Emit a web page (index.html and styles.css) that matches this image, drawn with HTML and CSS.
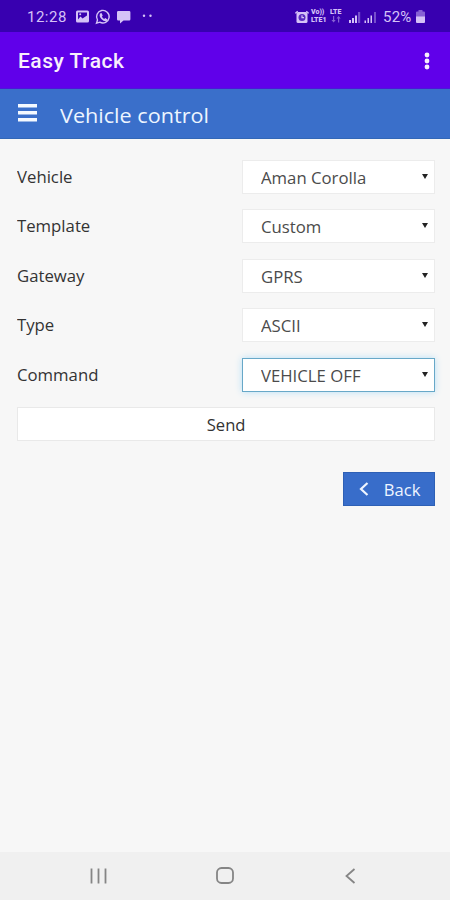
FILE: index.html
```html
<!DOCTYPE html>
<html lang="en">
<head>
<meta charset="utf-8">
<title>Easy Track</title>
<link rel="stylesheet" href="styles.css">
</head>
<body>
<div class="statusbar">
  <span class="clock">12:28</span>
  <svg class="notifications" width="80" height="16" viewBox="0 0 80 16">
    <path fill-rule="evenodd" d="M1.500 1.500h10q1.500 0 1.500 1.500v9q0 1.500-1.500 1.500h-10q-1.500 0-1.500-1.500v-9q0-1.500 1.500-1.500zM2 3.500v7l2.500-3 2 2 4.500-3v-3z"/>
    <circle cx="4.200" cy="5.300" r="1"/>
    <path class="line" d="M20.500 14.200l1-3.200a6.300 6.300 0 1 1 2.300 2.200z"/>
    <path d="M24 4.500l1.500-.5 1.200 2.500-.8 1.200q.8 1.500 2.200 2.200l1.200-.8 2.200 1.300-.8 1.500q-2.500 1-5.300-2t-1.200-5.400z"/>
    <path d="M42.200 2h11q1.200 0 1.200 1.200v7q0 1.200-1.200 1.200h-5.700l-3.500 3v-3h-1.800q-1.200 0-1.200-1.200v-7q0-1.200 1.200-1.200z"/>
    <circle cx="68" cy="6.800" r="1.200"/><circle cx="74.500" cy="6.800" r="1.200"/>
  </svg>
  <svg class="alarm" width="14" height="14" viewBox="0 0 14 14">
    <path d="M3 2h8q1.500 0 1.500 1.500v8q0 1.500-1.500 1.500h-8q-1.500 0-1.500-1.500v-8q0-1.500 1.500-1.500z"/>
    <circle class="face" cx="7" cy="7.500" r="3.500"/>
    <path class="hands" d="M7 5.300v2.400h2"/>
    <path class="line" d="M.3 3.300l2.400-2M13.700 3.300l-2.400-2"/>
  </svg>
  <span class="lte"><b>Vo))</b><b>LTE1</b></span>
  <span class="lte lte-two"><b>LTE</b>
    <svg width="12" height="7" viewBox="0 0 12 7"><path opacity=".5" d="M3 0h1.200v4h1.500L3.600 6.500 1.500 4H3zM8 6.500h1.200v-4h1.500L8.600 0 6.500 2.500H8z"/></svg>
  </span>
  <svg class="signal" width="28" height="12" viewBox="0 0 28 12">
    <path d="M0 9h2v3H0zM3 7h2v5H3zM6 4.500h2V12H6z"/><path opacity=".4" d="M9 1h2.200v11H9z"/>
    <path d="M15.500 9.500H17V12h-1.500zM18.500 7H20v5h-1.500zM21.500 4.500H23V12h-1.500z"/><path opacity=".4" d="M25 1h2v11h-2z"/>
  </svg>
  <span class="percent">52%</span>
  <svg class="battery" width="9" height="13" viewBox="0 0 9 13">
    <path opacity=".5" d="M2.500 0h4v1.500H8q1 0 1 1V7H0V2.500q0-1 1-1h1.500z"/><path d="M0 6.500h9V12q0 1-1 1H1q-1 0-1-1z"/>
  </svg>
</div>
<header class="appbar">
  <h1>Easy Track</h1>
  <svg width="6" height="18" viewBox="0 0 6 18"><circle cx="3" cy="3" r="2.400"/><circle cx="3" cy="9" r="2.400"/><circle cx="3" cy="15" r="2.400"/></svg>
</header>
<div class="pagebar">
  <svg width="19" height="18" viewBox="0 0 19 18"><path d="M0 0h19v3.600H0zM0 7h19v3.600H0zM0 14h19v3.600H0z"/></svg>
  <h2>Vehicle control</h2>
</div>
<main>
  <div class="row"><span class="label">Vehicle</span><div class="select"><span class="value">Aman Corolla</span><i class="caret"></i></div></div>
  <div class="row"><span class="label">Template</span><div class="select"><span class="value">Custom</span><i class="caret"></i></div></div>
  <div class="row"><span class="label">Gateway</span><div class="select"><span class="value">GPRS</span><i class="caret"></i></div></div>
  <div class="row"><span class="label">Type</span><div class="select"><span class="value">ASCII</span><i class="caret"></i></div></div>
  <div class="row"><span class="label">Command</span><div class="select focused"><span class="value">VEHICLE OFF</span><i class="caret"></i></div></div>
  <button class="send"><span>Send</span></button>
  <button class="back"><svg width="10" height="14" viewBox="0 0 10 14"><path d="M8.500 1L2 7l6.500 6"/></svg><span>Back</span></button>
</main>
<nav class="navbar">
  <svg width="17" height="16" viewBox="0 0 17 16"><path d="M1.500 .5v15M8.500 .5v15M15.500 .5v15"/></svg>
  <svg width="18" height="17" viewBox="0 0 18 17"><rect x="1" y="1" width="16" height="15" rx="4.500"/></svg>
  <svg width="11" height="16" viewBox="0 0 11 16"><path d="M9.500 1L1.500 8l8 7"/></svg>
</nav>
</body>
</html>
```
FILE: styles.css
```css
* { box-sizing: border-box; }
body {
  margin: 0;
  height: 900px;
  display: flex;
  flex-direction: column;
  background: #f7f7f7;
  font: 15.5px "Open Sans", sans-serif;
  color: #333;
  overflow: hidden;
}
.statusbar {
  height: 32px;
  flex: none;
  display: flex;
  align-items: center;
  padding: 1px 25px 0 27px;
  background: #3800b0;
  color: #d5c2f7;
  font: 15px Roboto, sans-serif;
}
.statusbar svg { fill: #d5c2f7; flex: none; }
.statusbar .line { fill: none; stroke: #d5c2f7; stroke-width: 1.4; }
.hands { fill: none; stroke: #d5c2f7; stroke-width: 1.2; }
.statusbar .face { fill: #5a2bc0; }
.clock { width: 49px; letter-spacing: .5px; }
.alarm { margin-left: auto; }
.lte { margin: -2px 0 0 2px; width: 18px; display: flex; flex-direction: column; font: bold 7px/8px Roboto, sans-serif; white-space: nowrap; }
.lte b { height: 8px; }
.lte-two { width: 15px; margin-left: 1px; }
.signal { margin: 1px 6px 0 4px; }
.percent { width: 30px; margin-right: 3px; white-space: nowrap; letter-spacing: .2px; }
.appbar {
  height: 57px;
  flex: none;
  display: flex;
  align-items: center;
  justify-content: space-between;
  padding: 0 20px 0 18px;
  background: #6000ea;
  border-bottom: 1px solid #4c16d8;
}
h1 { margin: 2px 0 0; font: 500 21px Roboto, sans-serif; color: #f8effc; letter-spacing: .5px; }
.appbar svg { fill: #f8effc; margin-top: 2px; }
.pagebar {
  height: 50px;
  flex: none;
  display: flex;
  align-items: center;
  gap: 23px;
  padding: 0 18px;
  background: #3a6fca;
  border-bottom: 1px solid #3267b7;
}
.pagebar svg { fill: #f4f9ff; margin-bottom: 2px; }
h2 {
  margin: 3px 0 0;
  font-size: 20.5px;
  font-weight: 400;
  color: #edf5ff;
  transform: scaleX(1.055);
  transform-origin: left;
}
main {
  flex: 1;
  display: flex;
  flex-direction: column;
  padding: 21px 15px 0 17px;
}
.row {
  height: 34px;
  margin-bottom: 15.400px;
  flex: none;
  display: flex;
  align-items: center;
  justify-content: space-between;
}
.label, .value { transform: scaleX(1.08); transform-origin: left; }
.select {
  width: 193px;
  height: 34px;
  display: flex;
  align-items: center;
  justify-content: space-between;
  padding: 2px 6px 0 18px;
  background: #fff;
  border: 1px solid #ececec;
  color: #4b4b4b;
}
.focused { border-color: #67a8c8; box-shadow: 0 0 7px #b5def5; }
.caret {
  margin-bottom: 3px;
  border: 3px solid transparent;
  border-top: 5px solid #222;
  border-bottom: 0;
}
button { font: 15.5px "Open Sans", sans-serif; cursor: pointer; }
button span { display: inline-block; transform: scaleX(1.07); }
.send {
  height: 34px;
  padding: 2px 0 0;
  background: #fff;
  border: 1px solid #e9e9e9;
  color: #333;
}
.back {
  width: 92px;
  height: 34px;
  margin-top: 31px;
  align-self: flex-end;
  display: flex;
  align-items: center;
  gap: 16px;
  padding: 2px 0 0 15px;
  background: #386dca;
  border: 1px solid #2e60b5;
  color: #eef5ff;
}
.back svg { fill: none; stroke: #eef5ff; stroke-width: 2.2; margin-bottom: 2px; }
.navbar {
  height: 48px;
  flex: none;
  display: flex;
  align-items: center;
  justify-content: space-between;
  padding: 0 94px 1px 90px;
  background: #f0f0f0;
}
.navbar svg { fill: none; stroke: #858585; stroke-width: 1.8; }
.navbar svg:nth-child(2) { margin-right: 3px; }
```
